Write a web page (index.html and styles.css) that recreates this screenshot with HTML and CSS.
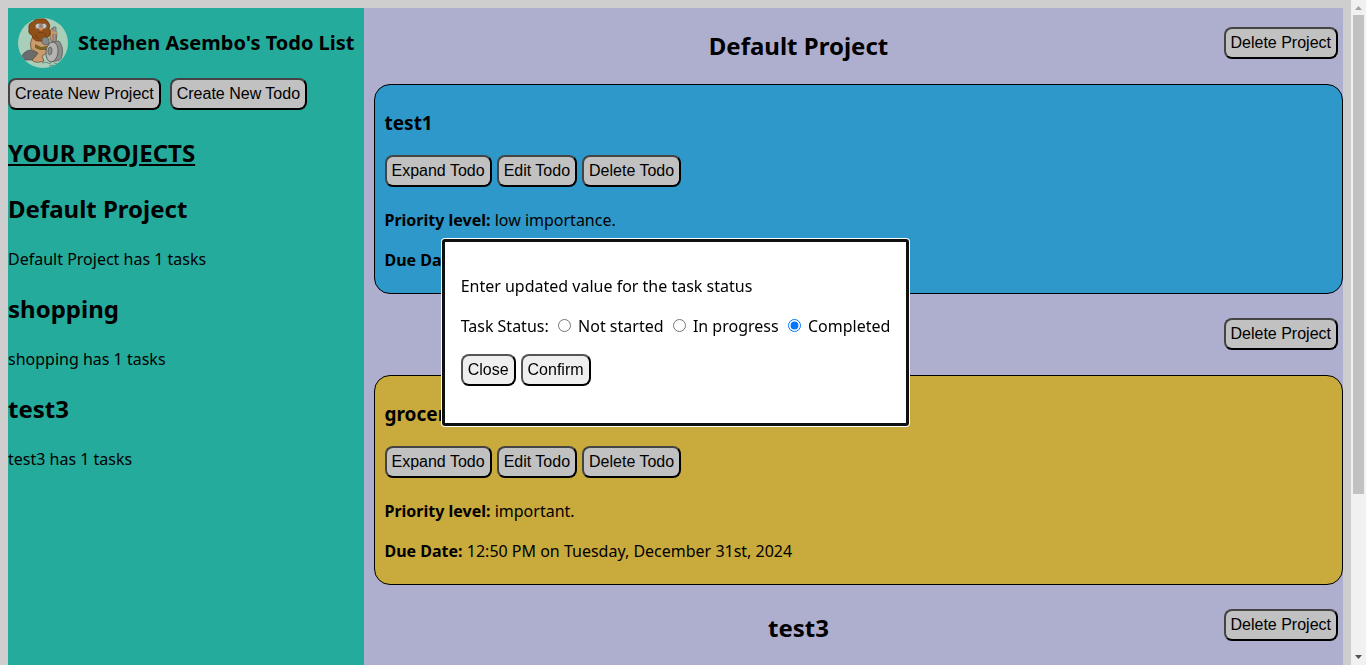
FILE: index.html
```html
<!DOCTYPE html>
<html lang="en">
<head>
<meta charset="utf-8">
<title>Stephen Asembo's Todo List</title>
<link rel="stylesheet" href="styles.css">
</head>
<body>
<div class="page">
  <aside class="sidebar">
    <header class="brand">
      <svg class="avatar" viewBox="0 0 50 50" aria-hidden="true">
        <defs><clipPath id="disc"><circle cx="25" cy="25" r="25"/></clipPath></defs>
        <g clip-path="url(#disc)">
          <rect width="50" height="50" fill="#a9ceba"/>
          <path d="M2 42 Q5 33 12 32 L18 34 24 40 18 42 Z" fill="#6b6c6e" stroke="#444" stroke-width=".6"/>
          <path d="M15 18 Q11 25 13 31 L20 35 17 39 14 42 Q17 46 26 43 L24 38 29 35 31 24 Z" fill="#c99c70" stroke="#634327" stroke-width=".7"/>
          <path d="M17 26 L23 29 29 28 28 32 22 32 17 30 Z" fill="#7a6425"/>
          <path d="M32 13 Q33 9 36 11 L39 15 38 23 34 27 32 19 Z" fill="#c99c70" stroke="#6b4a35" stroke-width=".7"/>
          <path d="M35 9 L38 9 38 25 35 26 Z" fill="#999" stroke="#555" stroke-width=".6"/>
          <path d="M33 15 Q36 13 39 16" fill="none" stroke="#c99c70" stroke-width="2"/>
          <path d="M11 11 Q10 5 15 4 Q17 0 22 1 Q28 0 30 4 Q33 7 31 11 Q34 16 30 19 Q27 24 21 23 Q15 23 14 17 Q10 16 11 11 Z" fill="#925019" stroke="#65330c" stroke-width=".8"/>
          <path d="M17 7 Q22 4 28 7 L27 11 18 11 Z" fill="#c68c60"/>
          <circle cx="20" cy="8" r="2.500" fill="#d3d7d2" stroke="#666" stroke-width=".7"/>
          <circle cx="26" cy="8" r="2.500" fill="#d3d7d2" stroke="#666" stroke-width=".7"/>
          <circle cx="21" cy="8" r=".6"/><circle cx="25" cy="8" r=".6"/>
          <ellipse cx="23" cy="11" rx="2" ry="1.500" fill="#cf9268"/>
          <path d="M20 14 Q23 16 26 14 M17 16 Q18 20 21 21 M28 15 Q28 19 25 21" fill="none" stroke="#65330c" stroke-width=".7"/>
          <path d="M24 21 Q27 17 31 21 L31 26 27 27 24 25 Z" fill="#868a87" stroke="#555" stroke-width=".7"/>
          <path d="M34 24 L41 23 Q46 29 44 38 Q43 43 38 43 L32 44 Z" fill="#8c8c8c" stroke="#555" stroke-width=".7"/>
          <ellipse cx="34" cy="34" rx="6" ry="10" transform="rotate(7 34 34)" fill="#b4b4b2" stroke="#5c5c5c" stroke-width=".9"/>
          <ellipse cx="32" cy="33" rx="2" ry="4" transform="rotate(7 32 33)" fill="#8e8e8e" stroke="#555" stroke-width=".7"/>
          <path d="M24 45 Q28 43 33 46 M31 48 L36 47 M36 45 L40 46" fill="none" stroke="#68736f" stroke-width=".8"/>
        </g>
      </svg>
      <h1 class="brand-name">Stephen Asembo's Todo List</h1>
    </header>
    <div class="create-actions">
      <button class="btn" type="button">Create New Project</button>
      <button class="btn" type="button">Create New Todo</button>
    </div>
    <h2 class="heading list-title">YOUR PROJECTS</h2>
    <h2 class="heading">Default Project</h2>
    <p class="count">Default Project has 1 tasks</p>
    <h2 class="heading">shopping</h2>
    <p class="count">shopping has 1 tasks</p>
    <h2 class="heading">test3</h2>
    <p class="count">test3 has 1 tasks</p>
  </aside>

  <main class="projects">
    <section class="project">
      <header class="project-header">
        <h2 class="heading project-title">Default Project</h2>
        <button class="btn" type="button">Delete Project</button>
      </header>
      <article class="todo todo-low">
        <h3 class="todo-title">test1</h3>
        <div class="todo-actions">
          <button class="btn" type="button">Expand Todo</button>
          <button class="btn" type="button">Edit Todo</button>
          <button class="btn" type="button">Delete Todo</button>
        </div>
        <p class="detail"><b>Priority level:</b> low importance.</p>
        <p class="detail"><b>Due Date:</b></p>
      </article>
    </section>
    <section class="project">
      <header class="project-header">
        <h2 class="heading project-title">shopping</h2>
        <button class="btn" type="button">Delete Project</button>
      </header>
      <article class="todo todo-important">
        <h3 class="todo-title">groceries</h3>
        <div class="todo-actions">
          <button class="btn" type="button">Expand Todo</button>
          <button class="btn" type="button">Edit Todo</button>
          <button class="btn" type="button">Delete Todo</button>
        </div>
        <p class="detail"><b>Priority level:</b> important.</p>
        <p class="detail"><b>Due Date:</b> 12:50 PM on Tuesday, December 31st, 2024</p>
      </article>
    </section>
    <section class="project">
      <header class="project-header">
        <h2 class="heading project-title">test3</h2>
        <button class="btn" type="button">Delete Project</button>
      </header>
    </section>
  </main>
</div>

<div class="scrollbar" aria-hidden="true">
  <svg class="arrow" viewBox="0 0 15 15"><path d="M4 10 L7.500 6 11 10 Z" fill="#a3a3a3"/></svg>
  <div class="track"><div class="thumb"></div></div>
  <svg class="arrow" viewBox="0 0 15 15"><path d="M4 5 L7.500 9 11 5 Z" fill="#505050"/></svg>
</div>

<dialog class="status-dialog" open>
  <form class="status-form">
    <p class="dialog-line">Enter updated value for the task status</p>
    <div class="dialog-line" role="radiogroup" aria-label="Task Status">
      Task Status:
      <input type="radio" id="not-started" name="status"> <label for="not-started">Not started</label>
      <input type="radio" id="in-progress" name="status"> <label for="in-progress">In progress</label>
      <input type="radio" id="completed" name="status" checked> <label for="completed">Completed</label>
    </div>
    <div class="dialog-actions">
      <button class="btn btn-light" type="button">Close</button>
      <button class="btn btn-light" type="button">Confirm</button>
    </div>
  </form>
</dialog>
</body>
</html>
```
FILE: styles.css
```css
* {
  box-sizing: border-box;
}

body {
  margin: 0;
  height: 100vh;
  display: grid;
  grid-template-columns: minmax(0, 1fr) 15px;
  overflow: hidden;
  background: #cecece;
  color: #000;
  font-family: "Noto Sans", sans-serif;
  font-size: 16px;
  line-height: 24px;
}

.page {
  display: flex;
  min-height: 0;
  padding: 8px 8px 0;
  overflow: hidden;
}

.sidebar {
  flex: none;
  background: #25ab9c;
}

.brand {
  display: flex;
  align-items: center;
  gap: 10px;
  padding: 10px 9px 10px 10px;
}

.avatar {
  width: 50px;
  height: 50px;
}

.brand-name {
  margin: 0;
  font-size: 20px;
  line-height: 30px;
}

.create-actions {
  display: flex;
  gap: 9px;
  margin-bottom: 25px;
}

.heading {
  margin: 20px 0;
  font-size: 24px;
  line-height: 36px;
}

.list-title {
  text-decoration: underline;
}

.count {
  margin: 0;
}

.btn {
  padding: 5px;
  border: 2px solid;
  border-color: #444 #000 #000 #444;
  border-radius: 8px;
  background: #c1c1c1;
  color: #000;
  font-family: "Liberation Sans", Arial, sans-serif;
  font-size: 16px;
  line-height: 18px;
}

.btn-light {
  border-color: #555 #000 #000 #555;
  background: #efefef;
}

.projects {
  flex: 1;
  min-width: 0;
  padding-left: 10px;
  background: #aeaece;
}

.project {
  margin-bottom: 5px;
}

.project-header {
  display: flex;
  align-items: flex-start;
  padding-right: 5px;
}

.project-title {
  flex: 1;
  text-align: center;
}

.project-header .btn {
  margin-top: 19px;
}

.todo {
  padding: 5px 10px;
  border: 1px solid #000;
  border-radius: 16px;
}

.todo-low {
  background: #2d98c9;
}

.todo-important {
  background: #c9aa3c;
}

.todo-title {
  margin: 19px 0 18px;
  font-size: 19px;
  line-height: 28px;
}

.todo-actions {
  display: flex;
  gap: 5px;
  margin-bottom: 21px;
}

.detail {
  margin: 0 0 16px;
}

.scrollbar {
  display: flex;
  flex-direction: column;
  min-height: 0;
  background: #f1f1f1;
}

.arrow {
  flex: none;
  width: 15px;
  height: 15px;
}

.track {
  flex: 1;
  padding: 0 2px;
}

.thumb {
  height: 75.5%;
  background: #c1c1c1;
}

.status-dialog {
  position: fixed;
  inset: 0 15px 0 0;
  width: fit-content;
  height: fit-content;
  margin: auto;
  padding: 16px;
  border: 3px solid #101010;
  border-radius: 3px;
  box-shadow: 0 0 0 1px #fff;
  background: #fff;
  color: #000;
}

.status-form {
  padding: 16px 0 21px;
}

.dialog-line {
  margin: 0 0 16px;
}

.dialog-actions {
  display: flex;
  gap: 5px;
}
```
